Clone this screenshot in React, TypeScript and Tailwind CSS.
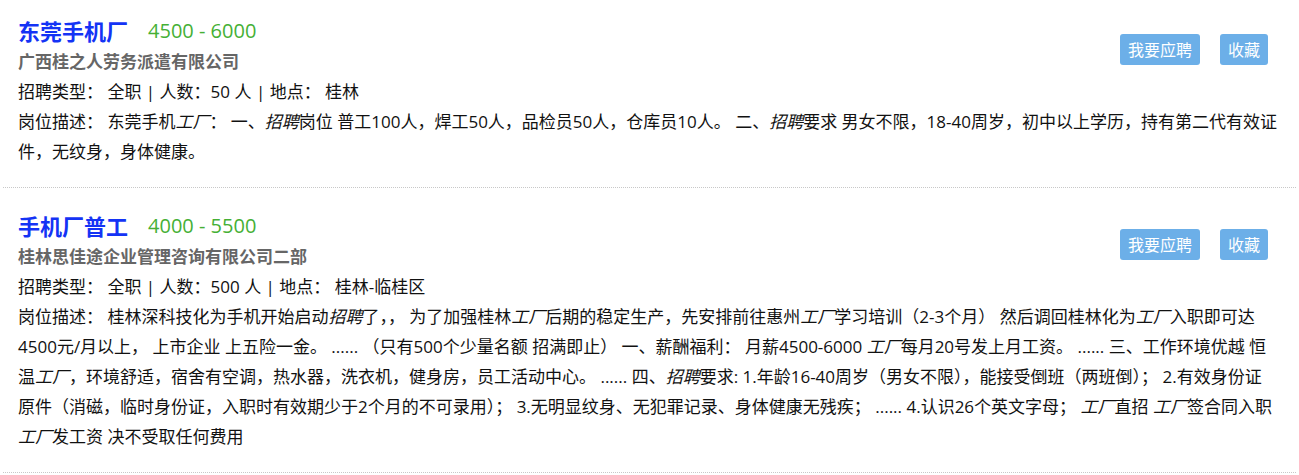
type Job = {
  title: string
  salary: string
  company: string
  type: string
  count: string
  place: string
  desc: React.ReactNode
}

const I = ({ children }: { children: React.ReactNode }) => <em className="italic">{children}</em>

const jobs: Job[] = [
  {
    title: "东莞手机厂",
    salary: "4500 - 6000",
    company: "广西桂之人劳务派遣有限公司",
    type: "全职",
    count: "50",
    place: "桂林",
    desc: (
      <>
        东莞手机<I>工厂</I>： 一、<I>招聘</I>岗位 普工100人，焊工50人，品检员50人，仓库员10人。 二、<I>招聘</I>要求 男女不限，18-40周岁，初中以上学历，持有第二代有效证件，无纹身，身体健康。
      </>
    ),
  },
  {
    title: "手机厂普工",
    salary: "4000 - 5500",
    company: "桂林思佳途企业管理咨询有限公司二部",
    type: "全职",
    count: "500",
    place: "桂林-临桂区",
    desc: (
      <>
        桂林深科技化为手机开始启动<I>招聘</I>了，， 为了加强桂林<I>工厂</I>后期的稳定生产，先安排前往惠州<I>工厂</I>学习培训（2-3个月） 然后调回桂林化为<I>工厂</I>入职即可达4500元/月以上， 上市企业 上五险一金。 ...... （只有500个少量名额 招满即止） 一、薪酬福利： 月薪4500-6000 <I>工厂</I>每月20号发上月工资。 ...... 三、工作环境优越 恒温<I>工厂</I>，环境舒适，宿舍有空调，热水器，洗衣机，健身房，员工活动中心。 ...... 四、<I>招聘</I>要求: 1.年龄16-40周岁（男女不限），能接受倒班（两班倒）； 2.有效身份证原件（消磁，临时身份证，入职时有效期少于2个月的不可录用）； 3.无明显纹身、无犯罪记录、身体健康无残疾； ...... 4.认识26个英文字母； <I>工厂</I>直招 <I>工厂</I>签合同入职<I>工厂</I>发工资 决不受取任何费用
      </>
    ),
  },
]

export default function App() {
  return (
    <div
      className="w-[1299px] bg-white text-[#111]"
      style={{ fontFamily: '"Open Sans", "Noto Sans CJK SC", sans-serif' }}
    >
      {jobs.map((job, i) => (
        <div
          key={i}
          className={`mx-[3px] border-b border-dotted border-[#c8c8c8] pb-[20px] pl-[15px] pr-[18px] ${i === 0 ? "pt-4" : "pt-[23px]"}`}
        >
          <div className="flex items-start justify-between">
            <div>
              <div className="flex items-center gap-5 leading-[30px]">
                <span className="text-[22px] font-bold text-[#1433f5]">{job.title}</span>
                <span className="text-[20px] text-[#45b035]">{job.salary}</span>
              </div>
              <div className="text-[17px] font-bold leading-[31px] text-[#666]">{job.company}</div>
              <div className="text-[17px] leading-[30px]">
                招聘类型： 全职 | 人数：{job.count} 人 | 地点： {job.place}
              </div>
            </div>
            <div className="mr-[10px] flex gap-5 pt-[18px]">
              <button className="h-[31px] rounded-[3px] bg-[#6cafe8] px-2 text-[16px] text-white">我要应聘</button>
              <button className="h-[31px] rounded-[3px] bg-[#6cafe8] px-2 text-[16px] text-white">收藏</button>
            </div>
          </div>
          <p className="text-[17px] leading-[30px]">岗位描述： {job.desc}</p>
        </div>
      ))}
    </div>
  )
}
